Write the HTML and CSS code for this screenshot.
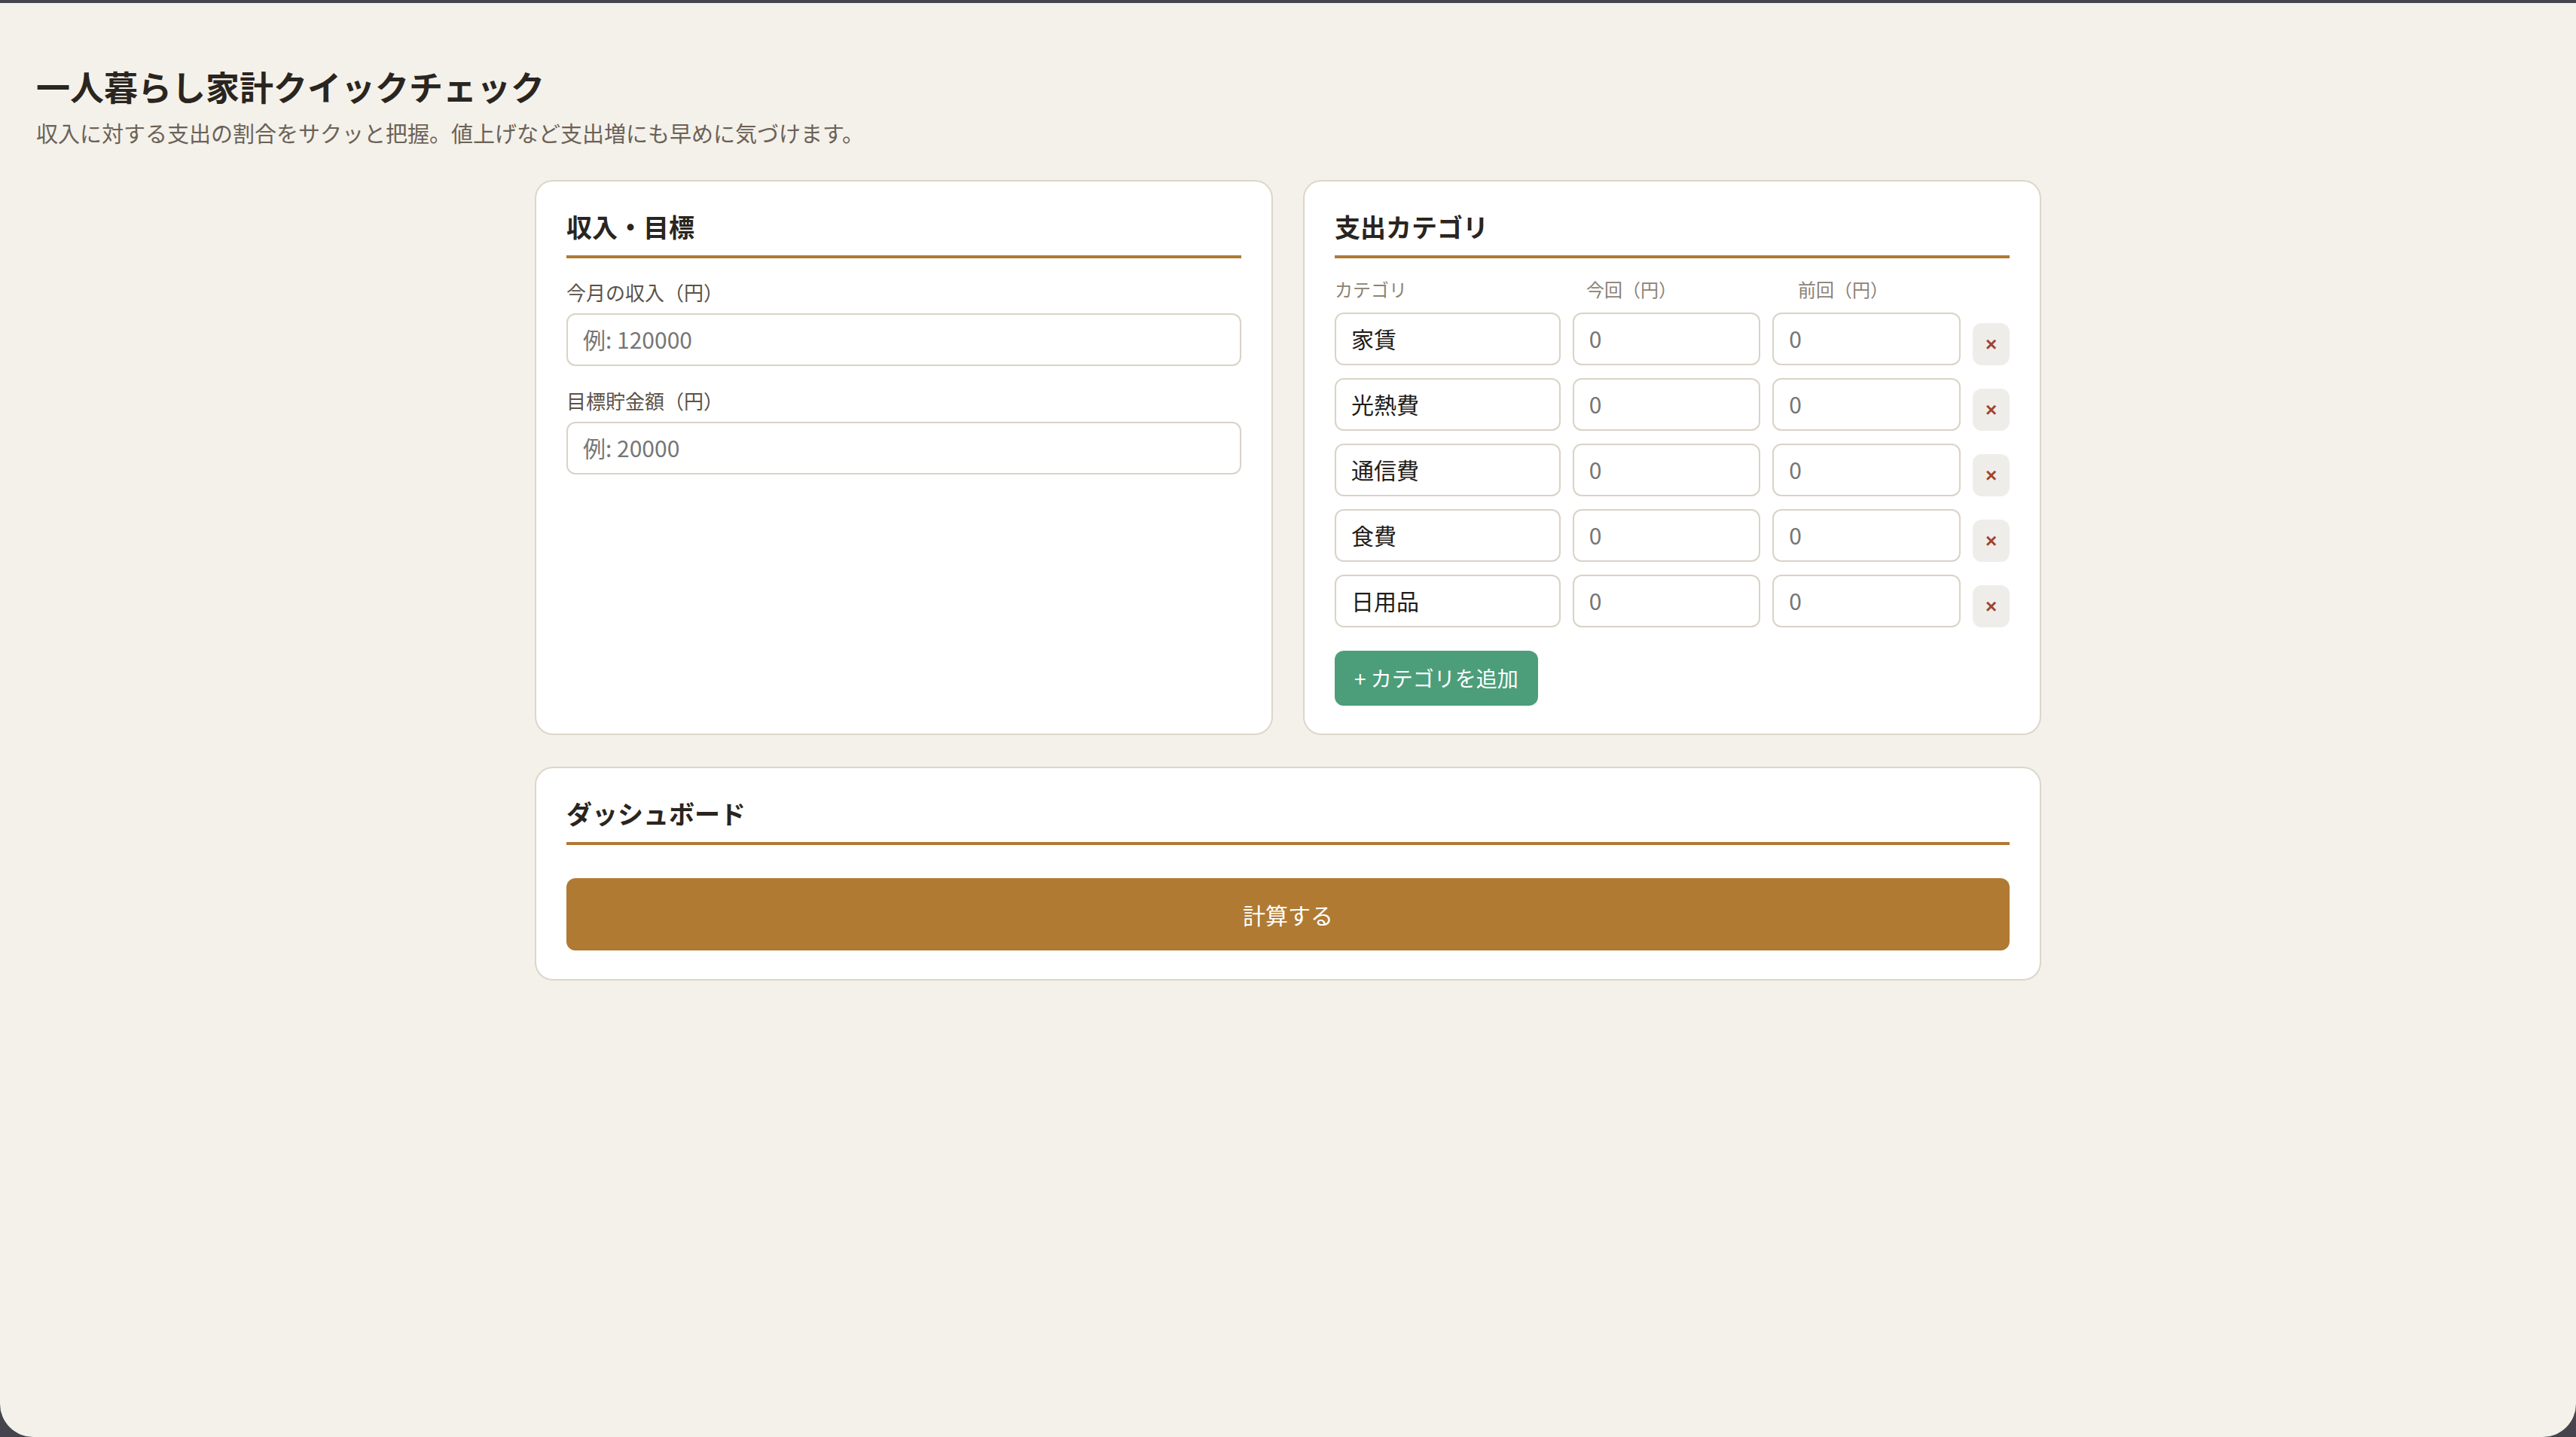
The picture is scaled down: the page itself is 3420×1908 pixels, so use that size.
FILE: index.html
```html
<!DOCTYPE html>
<html lang="ja">
<head>
<meta charset="utf-8">
<title>一人暮らし家計クイックチェック</title>
<link rel="stylesheet" href="styles.css">
</head>
<body>
<div class="window">
  <header class="page-header">
    <h1 class="page-title">一人暮らし家計クイックチェック</h1>
    <p class="page-lead">収入に対する支出の割合をサクッと把握。値上げなど支出増にも早めに気づけます。</p>
  </header>
  <main class="layout">
    <section class="card">
      <h2 class="card-title">収入・目標</h2>
      <div class="field">
        <label class="field-label">今月の収入（円）</label>
        <input class="text-input" type="text" placeholder="例: 120000">
      </div>
      <div class="field">
        <label class="field-label">目標貯金額（円）</label>
        <input class="text-input" type="text" placeholder="例: 20000">
      </div>
    </section>
    <section class="card card-cats">
      <h2 class="card-title">支出カテゴリ</h2>
      <div class="cat-head">
        <span>カテゴリ</span><span>今回（円）</span><span>前回（円）</span><span></span>
      </div>
      <div class="cat-list">
        <div class="cat-row">
          <input class="text-input" type="text" value="家賃">
          <input class="text-input" type="text" placeholder="0">
          <input class="text-input" type="text" placeholder="0">
          <button class="del-btn" type="button">×</button>
        </div>
        <div class="cat-row">
          <input class="text-input" type="text" value="光熱費">
          <input class="text-input" type="text" placeholder="0">
          <input class="text-input" type="text" placeholder="0">
          <button class="del-btn" type="button">×</button>
        </div>
        <div class="cat-row">
          <input class="text-input" type="text" value="通信費">
          <input class="text-input" type="text" placeholder="0">
          <input class="text-input" type="text" placeholder="0">
          <button class="del-btn" type="button">×</button>
        </div>
        <div class="cat-row">
          <input class="text-input" type="text" value="食費">
          <input class="text-input" type="text" placeholder="0">
          <input class="text-input" type="text" placeholder="0">
          <button class="del-btn" type="button">×</button>
        </div>
        <div class="cat-row">
          <input class="text-input" type="text" value="日用品">
          <input class="text-input" type="text" placeholder="0">
          <input class="text-input" type="text" placeholder="0">
          <button class="del-btn" type="button">×</button>
        </div>
      </div>
      <button class="add-btn" type="button">+ カテゴリを追加</button>
    </section>
    <section class="card card-wide">
      <h2 class="card-title">ダッシュボード</h2>
      <button class="calc-btn" type="button">計算する</button>
    </section>
  </main>
</div>
</body>
</html>
```
FILE: styles.css
```css
* { box-sizing: border-box; }
html, body { margin: 0; }
body {
  background: #45434b;
  padding-top: 4px;
  font-family: "Noto Sans CJK JP", "Liberation Sans", sans-serif;
}
.window {
  background: #f4f1ea;
  min-height: 1904px;
  border-radius: 0 0 44px 44px;
  padding: 82px 48px 48px;
}
.page-title {
  margin: 0;
  font-size: 45px;
  line-height: 57px;
  font-weight: 700;
  color: #2a2520;
}
.page-lead {
  margin: 12px 0 0;
  font-size: 29px;
  line-height: 42px;
  color: #6b6257;
}
.layout {
  max-width: 2000px;
  margin: 42px auto 0;
  display: grid;
  grid-template-columns: 1fr 1fr;
  gap: 42px 40px;
}
.card {
  background: #fff;
  border: 2px solid #ddd6c9;
  border-radius: 24px;
  padding: 38px 40px 40px;
}
.card-cats { padding-bottom: 37px; }
.card-wide { grid-column: 1 / -1; padding-bottom: 38px; }
.card-title {
  margin: 0;
  font-size: 34px;
  line-height: 44px;
  font-weight: 700;
  color: #2a2520;
  padding-bottom: 16px;
  border-bottom: 4px solid #b07a33;
}
.field { margin-top: 25px; }
.field + .field { margin-top: 26px; }
.field-label {
  display: block;
  font-size: 26px;
  line-height: 39px;
  color: #5a5248;
  margin-bottom: 9px;
}
.text-input {
  display: block;
  width: 100%;
  height: 70px;
  border: 2px solid #dad3c6;
  border-radius: 12px;
  padding: 0 20px 2px;
  font-family: inherit;
  font-size: 30px;
  color: #1f1c19;
  background: #fff;
  outline: none;
  min-width: 0;
}
.text-input::placeholder { color: #767676; }
.cat-head, .cat-row {
  display: grid;
  grid-template-columns: 1.2fr 1fr 1fr auto;
  column-gap: 16px;
}
.cat-head {
  margin-top: 23px;
  margin-bottom: 13px;
  font-size: 24px;
  line-height: 36px;
  color: #8c8273;
}
.cat-list {
  display: flex;
  flex-direction: column;
  gap: 17px;
}
.cat-row { align-items: end; }
.del-btn {
  width: 49px;
  height: 56px;
  border: none;
  border-radius: 12px;
  background: #efedea;
  color: #a0442e;
  font-family: "Liberation Sans", sans-serif;
  font-size: 26px;
  font-weight: 700;
  padding: 0;
}
.add-btn {
  display: block;
  margin-top: 31px;
  height: 73px;
  padding: 0 26px 2px;
  background: #4c9e7b;
  color: #fff;
  border: none;
  border-radius: 12px;
  font-family: inherit;
  font-size: 28px;
}
.calc-btn {
  display: block;
  width: 100%;
  margin-top: 44px;
  height: 96px;
  background: #b07a33;
  color: #fff;
  border: none;
  border-radius: 12px;
  font-family: inherit;
  font-size: 30px;
  padding-bottom: 2px;
}
```
